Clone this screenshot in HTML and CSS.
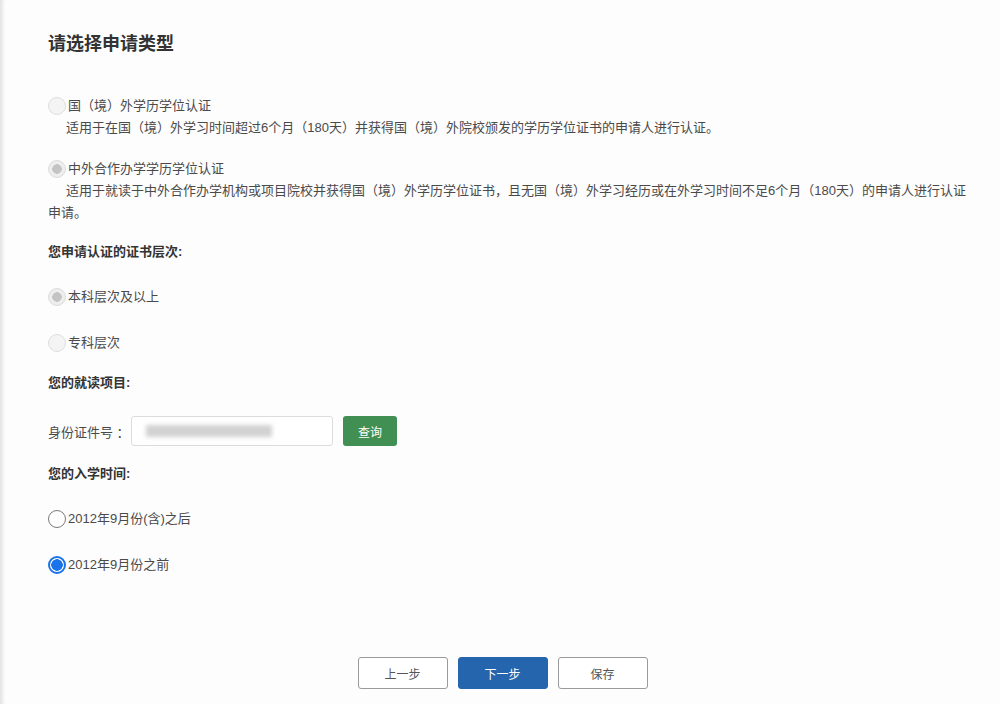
FILE: index.html
```html
<!DOCTYPE html>
<html lang="zh-CN">
<head>
    <meta charset="UTF-8">
    <meta name="viewport" content="width=device-width, initial-scale=1.0">
    <title>申请类型</title>
    <link rel="stylesheet" href="styles.css">
</head>
<body>
    <div class="page">
        <h2 class="page-title">请选择申请类型</h2>

        <!-- 申请类型 -->
        <div class="apply-type">
            <div class="type-item">
                <label class="radio-line">
                    <input type="radio" name="type" class="radio radio-off" disabled>国（境）外学历学位认证
                </label>
                <p class="type-desc">适用于在国（境）外学习时间超过6个月（180天）并获得国（境）外院校颁发的学历学位证书的申请人进行认证。</p>
            </div>
            <div class="type-item">
                <label class="radio-line">
                    <input type="radio" name="type" class="radio radio-off" checked disabled>中外合作办学学历学位认证
                </label>
                <p class="type-desc">适用于就读于中外合作办学机构或项目院校并获得国（境）外学历学位证书，且无国（境）外学习经历或在外学习时间不足6个月（180天）的申请人进行认证申请。</p>
            </div>
        </div>

        <h3 class="block-title">您申请认证的证书层次:</h3>
        <div class="radio-group">
            <label class="radio-line">
                <input type="radio" name="level" class="radio radio-off" checked disabled>本科层次及以上
            </label>
            <label class="radio-line">
                <input type="radio" name="level" class="radio radio-off" disabled>专科层次
            </label>
        </div>

        <h3 class="block-title">您的就读项目:</h3>
        <div class="query-row">
            <span class="query-label">身份证件号 ：</span>
            <div class="query-input"><span class="masked"></span></div>
            <button type="button" class="btn-query">查询</button>
        </div>

        <h3 class="block-title">您的入学时间:</h3>
        <div class="radio-group">
            <label class="radio-line">
                <input type="radio" name="time" class="radio radio-on">2012年9月份(含)之后
            </label>
            <label class="radio-line">
                <input type="radio" name="time" class="radio radio-on" checked>2012年9月份之前
            </label>
        </div>

        <div class="actions">
            <button type="button" class="btn">上一步</button>
            <button type="button" class="btn btn-primary">下一步</button>
            <button type="button" class="btn">保存</button>
        </div>
    </div>
</body>
</html>
```

FILE: styles.css
```css
body {
    margin: 0;
    padding: 0;
    background-color: #fdfdfd;
    font-family: "Liberation Sans", "Noto Sans CJK SC", sans-serif;
    font-size: 13px;
    color: #444;
    box-shadow: inset 5px 0 4px -3px #dcdcdc;
    min-height: 704px;
}
.page {
    width: 924px;
    padding: 30px 28px 0 48px;
}
.page-title {
    margin: 0;
    font-size: 18px;
    line-height: 28px;
    font-weight: bold;
    color: #333;
}
.apply-type {
    margin-top: 37px;
}
.type-item + .type-item {
    margin-top: 19px;
}
.type-desc {
    margin: 0;
    line-height: 22px;
    text-indent: 18px;
    color: #4a4a4a;
}
.radio-line {
    display: flex;
    align-items: center;
    height: 22px;
    line-height: 22px;
    color: #4a4a4a;
}
.radio {
    appearance: none;
    -webkit-appearance: none;
    width: 18px;
    height: 18px;
    margin: 0 2px 0 0;
    border-radius: 50%;
    box-sizing: border-box;
    flex-shrink: 0;
}
.radio-off {
    background-color: #f4f4f4;
    border: 1px solid #dedede;
}
.radio-off:checked {
    background: radial-gradient(circle, #c4c4c4 0 4.5px, #eeeeee 5px);
    border-color: #dcdcdc;
}
.radio-on {
    background-color: #fff;
    border: 1px solid #7a7a7a;
}
.radio-on:checked {
    border: 2px solid #1a73e8;
    background: radial-gradient(circle, #1a73e8 0 5.5px, #fff 6px);
}
.block-title {
    margin: 17px 0 0;
    font-size: 13px;
    line-height: 22px;
    font-weight: bold;
    color: #333;
}
.radio-group {
    display: flex;
    flex-direction: column;
    gap: 24px;
    margin-top: 23px;
}
.radio-group + .block-title {
    margin-top: 18px;
}
.query-row {
    display: flex;
    align-items: center;
    margin-top: 22px;
}
.query-label {
    width: 83px;
    color: #4a4a4a;
}
.query-input {
    width: 202px;
    height: 30px;
    box-sizing: border-box;
    border: 1px solid #dcdcdc;
    border-radius: 3px;
    background-color: #fff;
    display: flex;
    align-items: center;
    padding-left: 14px;
}
.masked {
    display: block;
    width: 126px;
    height: 12px;
    background-color: #d2d2d2;
    filter: blur(2px);
}
.btn-query {
    margin-left: 10px;
    width: 54px;
    height: 30px;
    border: none;
    border-radius: 3px;
    background-color: #418f52;
    color: #fff;
    font-family: inherit;
    font-size: 12px;
}
.query-row + .block-title {
    margin-top: 17px;
}
.actions {
    display: flex;
    justify-content: center;
    gap: 10px;
    margin-top: 81px;
    padding-right: 15px;
}
.btn {
    width: 90px;
    height: 32px;
    box-sizing: border-box;
    border: 1px solid #9a9a9a;
    border-radius: 3px;
    background-color: #fff;
    color: #555;
    font-family: inherit;
    font-size: 12px;
}
.btn-primary {
    border-color: #2465ae;
    background-color: #2465ae;
    color: #fff;
}
```
